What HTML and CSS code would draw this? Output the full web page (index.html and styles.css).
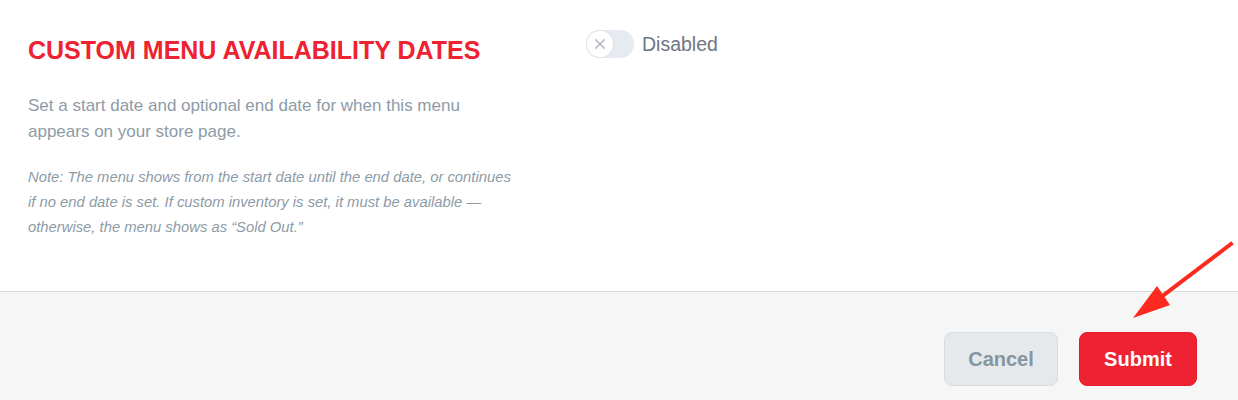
FILE: index.html
```html
<!DOCTYPE html>
<html>
<head>
<meta charset="utf-8">
<link rel="stylesheet" href="styles.css">
</head>
<body>
<div class="page">
  <section class="content">
    <div class="info">
      <h2 class="title">CUSTOM MENU AVAILABILITY DATES</h2>
      <p class="desc">Set a start date and optional end date for when this menu appears on your store page.</p>
      <p class="note">Note: The menu shows from the start date until the end date, or continues if no end date is set. If custom inventory is set, it must be available — otherwise, the menu shows as “Sold Out.”</p>
    </div>
    <div class="control">
      <span class="toggle">
        <span class="knob">
          <svg width="12" height="12" viewBox="0 0 12 12"><path d="M1.8 1.8 L10.2 10.2 M10.2 1.8 L1.8 10.2" stroke="#b9bec6" stroke-width="1.7" stroke-linecap="round"/></svg>
        </span>
      </span>
      <span class="toggle-label">Disabled</span>
    </div>
  </section>
  <footer class="footer">
    <button class="btn btn-cancel">Cancel</button>
    <button class="btn btn-submit">Submit</button>
  </footer>
  <svg class="arrow" width="120" height="100" viewBox="0 0 120 100">
    <line x1="113" y1="6" x2="38" y2="63" stroke="#ff2a1f" stroke-width="4" stroke-linecap="square"/>
    <polygon points="15,80 39,48 52,67" fill="#ff2a1f"/>
  </svg>
</div>
</body>
</html>
```
FILE: styles.css
```css
* { box-sizing: border-box; }
html, body { margin: 0; padding: 0; background: #fff; }
body { font-family: "Liberation Sans", Arial, sans-serif; }
.page { position: relative; width: 1238px; height: 400px; overflow: hidden; }
.content {
  display: grid;
  grid-template-columns: 558px 1fr;
  padding: 30px 0 0 28px;
  height: 292px;
  border-bottom: 1px solid #d9d9d9;
}
.title {
  margin: 5px 0 0;
  font-size: 25px;
  line-height: 30px;
  font-weight: 700;
  color: #ee2231;
  letter-spacing: 0;
}
.desc {
  margin: 28px 0 0;
  width: 480px;
  font-size: 17px;
  line-height: 26px;
  color: #8d9ba7;
}
.note {
  margin: 20px 0 0;
  width: 490px;
  font-size: 14.8px;
  line-height: 25px;
  font-style: italic;
  color: #8d9ba7;
}
.control { display: flex; align-items: center; gap: 8px; height: 28px; align-self: start; }
.toggle {
  display: inline-flex;
  align-items: center;
  width: 48px;
  height: 28px;
  border-radius: 14px;
  background: #e6eaf1;
  padding: 1px;
}
.knob {
  width: 26px;
  height: 26px;
  border-radius: 50%;
  background: #fff;
  box-shadow: 0 0 0 1px #e1e5eb;
  display: inline-flex;
  align-items: center;
  justify-content: center;
}
.toggle-label { font-size: 19.5px; color: #6e7584; }
.footer {
  display: flex;
  justify-content: flex-end;
  align-items: flex-start;
  gap: 21px;
  padding: 40px 41px 0 0;
  background: #f6f6f6;
  height: 108px;
}
.btn {
  height: 54px;
  border-radius: 8px;
  font-family: "Liberation Sans", Arial, sans-serif;
  font-weight: 700;
  font-size: 20px;
  cursor: pointer;
}
.btn-cancel {
  width: 114px;
  background: #e5e9ec;
  border: 1px solid #d6dde2;
  color: #8696a1;
}
.btn-submit {
  width: 118px;
  background: #ee2231;
  border: 1px solid #e01e2d;
  color: #fff;
}
.arrow { position: absolute; left: 1118px; top: 238px; }
```
